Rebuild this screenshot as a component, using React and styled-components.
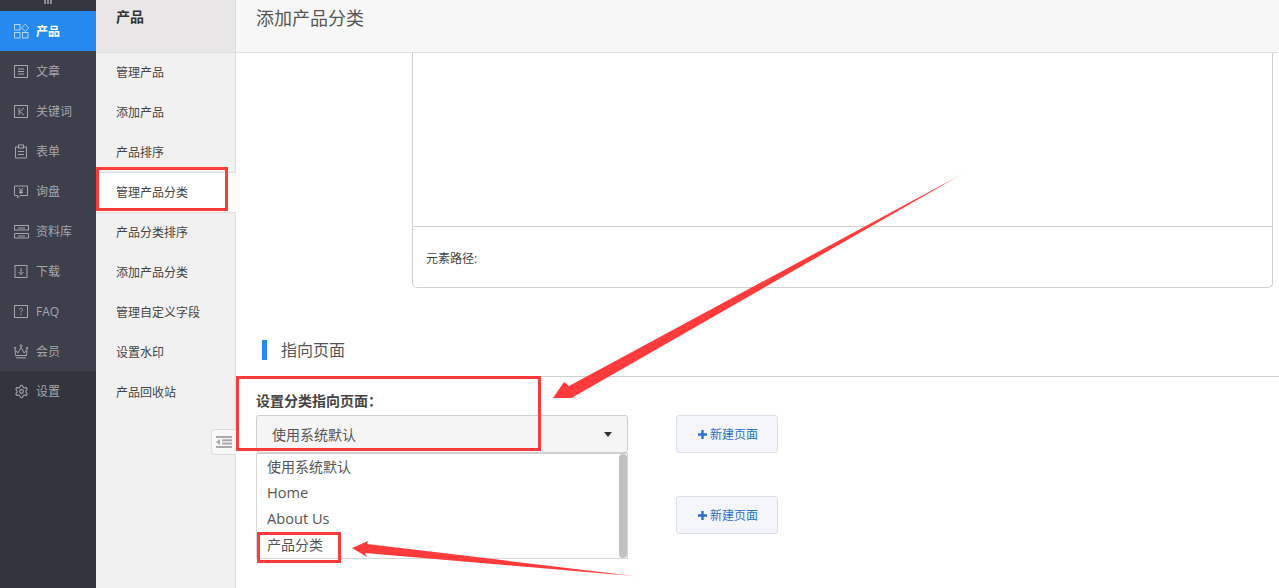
import React from "react";
import styled, { createGlobalStyle } from "styled-components";
import { Settings } from "lucide-react";

const Global = createGlobalStyle`
  html, body { margin: 0; padding: 0; height: 100%; }
  body { font-family: "Open Sans", "Noto Sans CJK SC", sans-serif; color: #333; background: #fff; overflow: hidden; }
  * { box-sizing: border-box; }
`;

const Page = styled.div`
  position: relative;
  display: flex;
  width: 1279px;
  height: 588px;
  overflow: hidden;
`;

const Rail = styled.nav`
  display: flex;
  flex-direction: column;
  flex: 0 0 96px;
  background: #3d3f4b;
`;
const RailTop = styled.div`
  display: flex;
  justify-content: center;
  align-items: flex-start;
  height: 11px;
  background: #33353f;
`;
const RailBottom = styled.div`
  flex: 1;
  background: #32343e;
`;
const RailItem = styled.div`
  display: flex;
  align-items: center;
  gap: 7px;
  height: 40px;
  padding-left: 14px;
  font-size: 12px;
  color: ${(p) => (p.$active ? "#ffffff" : "#a5a6ab")};
  background: ${(p) => (p.$active ? "#2589f0" : "transparent")};
  font-weight: ${(p) => (p.$active ? 700 : 400)};
  svg { flex: 0 0 15px; color: ${(p) => (p.$active ? "#b4d6fa" : "#a5a6ab")}; }
`;

const SubNav = styled.aside`
  position: relative;
  flex: 0 0 140px;
  background: #f1f1f1;
  border-right: 1px solid #dedede;
`;
const SubHeader = styled.div`
  height: 53px;
  padding: 8px 0 0 20px;
  font-size: 14px;
  font-weight: 700;
  line-height: 18px;
  color: #333;
  background: #e8e6e6;
  border-bottom: 1px solid #dcdfe6;
`;
const SubItem = styled.div`
  display: flex;
  align-items: center;
  height: 40px;
  padding: 0 0 2px 20px;
  font-size: 12px;
  color: #444;
  ${(p) =>
    p.$current &&
    `background: #fff;
     margin-right: -1px;
     margin-top: -1px;
     height: 41px;
     position: relative;
     padding-top: 0;
     border-top: 1px solid #dedede;
     border-bottom: 1px solid #dedede;`}
`;
const Collapse = styled.button`
  position: absolute;
  left: 115px;
  top: 429px;
  display: flex;
  align-items: center;
  justify-content: center;
  width: 25px;
  height: 26px;
  padding: 0;
  color: #aaa;
  background: #f8f8f8;
  border: 1px solid #dcdcdc;
  border-right: none;
  border-radius: 4px 0 0 4px;
`;

const Main = styled.main`
  flex: 1;
  min-width: 0;
`;
const MainHeader = styled.header`
  height: 53px;
  padding: 5px 0 0 20px;
  font-size: 18px;
  line-height: 26px;
  color: #555;
  background: #f7f7f7;
  border-bottom: 1px solid #dcdfe6;
`;
const EditorBox = styled.section`
  height: 235px;
  margin: 0 6px 0 176px;
  border: 1px solid #d0d0d0;
  border-top: none;
  border-radius: 0 0 5px 5px;
`;
const EditorBody = styled.div`
  height: 174px;
  border-bottom: 1px solid #d0d0d0;
`;
const EditorPath = styled.div`
  padding: 23px 0 0 13px;
  font-size: 12px;
  line-height: 18px;
  color: #444;
`;
const SectionTitle = styled.h2`
  display: flex;
  align-items: center;
  gap: 14px;
  height: 89px;
  margin: 0;
  padding: 36px 0 0 26px;
  border-bottom: 1px solid #d0d0d0;
  font-size: 16px;
  font-weight: 400;
  line-height: 20px;
  color: #555;
  &::before {
    content: "";
    align-self: flex-start;
    margin-top: 16px;
    width: 5px;
    height: 20px;
    background: #2589f0;
  }
`;
const FormRow = styled.div`
  display: flex;
  gap: 48px;
  padding: 16px 0 0 20px;
`;
const Field = styled.div`
  flex: 0 0 372px;
`;
const Label = styled.div`
  height: 22px;
  font-size: 14px;
  font-weight: 700;
  line-height: 16px;
  color: #444;
`;
const Select = styled.div`
  display: flex;
  align-items: center;
  justify-content: space-between;
  height: 38px;
  padding: 0 15px;
  font-size: 14px;
  color: #555;
  background: #f5f5f5;
  border: 1px solid #cfcfcf;
  border-radius: 3px;
`;
const Caret = styled.span`
  width: 0;
  height: 0;
  border-left: 4.5px solid transparent;
  border-right: 4.5px solid transparent;
  border-top: 5px solid #333;
`;
const Dropdown = styled.div`
  display: flex;
  height: 106px;
  background: #fff;
  border: 1px solid #d8d8d8;
  border-top-color: #cfcfcf;
`;
const Options = styled.ul`
  flex: 1;
  margin: 0;
  padding: 0;
  list-style: none;
`;
const Option = styled.li`
  height: 26px;
  padding-left: 10px;
  font-size: ${(p) => (p.$latin ? "14.6px" : "14px")};
  line-height: ${(p) => (p.$latin ? "24px" : "26px")};
  color: #555;
`;
const Thumb = styled.div`
  flex: 0 0 8px;
  border-radius: 4px;
  background: #c1c1c1;
`;
const Actions = styled.div`
  display: flex;
  flex-direction: column;
  gap: 43px;
  padding-top: 22px;
`;
const NewPage = styled.button`
  display: flex;
  align-items: center;
  justify-content: center;
  gap: 3px;
  width: 102px;
  height: 38px;
  padding: 0 0 0 2px;
  font-family: inherit;
  font-size: 12px;
  color: #2a6fd0;
  background: #f4f6fb;
  border: 1px solid #dcdfe8;
  border-radius: 3px;
`;

const Marks = styled.svg`
  position: absolute;
  left: 0;
  top: 0;
  pointer-events: none;
`;

const I = ({ children }) => (
  <svg width="15" height="15" viewBox="0 0 15 15" fill="none" stroke="currentColor" strokeWidth="1">
    {children}
  </svg>
);

const icons = {
  grid: (
    <I>
      <rect x=".5" y=".5" width="5.500" height="5.500" />
      <path d="M11.200 .2 14.800 3.800 11.200 7.400 7.600 3.800Z" />
      <rect x=".5" y="8.500" width="5.500" height="5.500" />
      <rect x="8.500" y="8.500" width="5.500" height="5.500" />
    </I>
  ),
  doc: (
    <I>
      <rect x=".5" y="1.500" width="13" height="12" />
      <path d="M4 5h6M4 7.500h6M4 10h6" />
    </I>
  ),
  key: (
    <I>
      <rect x=".5" y="1.500" width="13" height="12" />
      <path d="M5 4v7M10 4 5.500 7.500 10 11" />
    </I>
  ),
  form: (
    <I>
      <path d="M4 3H1.500v11h11V3H10" />
      <rect x="4.500" y="1" width="5" height="3" />
      <path d="M4 7.500h6M4 10.500h6" />
    </I>
  ),
  ask: (
    <I>
      <path d="M.5 2h13v9.500H6L3.500 14v-2.500H.5Z" />
      <path d="M5 4l2 2.500L9 4M7 6.500V10M5 7h4M5 8.500h4" />
    </I>
  ),
  lib: (
    <I>
      <rect x=".5" y="1.500" width="14" height="4.500" />
      <path d="M.5 9.500h14v4.500H.5Z" />
      <path d="M4 4h7M4 12h7" />
    </I>
  ),
  down: (
    <I>
      <rect x="1" y="1.500" width="12" height="12" />
      <path d="M7 4v6.500M4.500 8 7 10.500 9.500 8" />
    </I>
  ),
  faq: (
    <I>
      <rect x=".5" y="1.500" width="13" height="12" />
      <path d="M5.500 5.500C5.500 4 8.500 4 8.500 5.700 8.500 7 7 7 7 8.500M7 9.800v1.200" />
    </I>
  ),
  crown: (
    <I>
      <path d="M1 5.500 3.800 9 7 3.500 10.200 9 13 5.500 12.500 11.500H1.500Z" />
      <path d="M2 13.800h10" />
      <circle cx="7" cy="1.800" r="1" />
      <circle cx="1" cy="4" r=".8" />
      <circle cx="13" cy="4" r=".8" />
    </I>
  ),
};

const railItems = [
  ["grid", "产品", true],
  ["doc", "文章"],
  ["key", "关键词"],
  ["form", "表单"],
  ["ask", "询盘"],
  ["lib", "资料库"],
  ["down", "下载"],
  ["faq", "FAQ"],
  ["crown", "会员"],
];

const subItems = ["管理产品", "添加产品", "产品排序", "管理产品分类", "产品分类排序", "添加产品分类", "管理自定义字段", "设置水印", "产品回收站"];

const PlusIcon = () => (
  <svg width="9" height="9" viewBox="0 0 9 9" fill="#2a6fd0">
    <path d="M3.300 0h2.400v3.300H9v2.400H5.700V9H3.300V5.700H0V3.300h3.300Z" />
  </svg>
);

export default function App() {
  return (
    <Page>
      <Global />
      <Rail>
        <RailTop>
          <svg width="10" height="5" viewBox="0 0 10 5" fill="#8d8e94">
            <rect x="1" width="2" height="4" />
            <rect x="4" width="2" height="4" />
            <rect x="7" width="2" height="4" />
          </svg>
        </RailTop>
        {railItems.map(([icon, label, active]) => (
          <RailItem key={label} $active={active}>
            {icons[icon]}
            {label}
          </RailItem>
        ))}
        <RailBottom>
          <RailItem>
            <Settings size={15} strokeWidth={1.700} />
            设置
          </RailItem>
        </RailBottom>
      </Rail>
      <SubNav>
        <SubHeader>产品</SubHeader>
        {subItems.map((label, i) => (
          <SubItem key={label} $current={i === 3}>
            {label}
          </SubItem>
        ))}
        <Collapse aria-label="收起">
          <svg width="16" height="12" viewBox="0 0 16 12" fill="currentColor">
            <rect x="0" y="0" width="16" height="2" />
            <rect x="6" y="3.300" width="10" height="2" />
            <rect x="6" y="6.600" width="10" height="2" />
            <rect x="0" y="10" width="16" height="2" />
            <path d="M4 3v6L0 6Z" />
          </svg>
        </Collapse>
      </SubNav>
      <Main>
        <MainHeader>添加产品分类</MainHeader>
        <EditorBox>
          <EditorBody />
          <EditorPath>元素路径:</EditorPath>
        </EditorBox>
        <SectionTitle>指向页面</SectionTitle>
        <FormRow>
          <Field>
            <Label>设置分类指向页面：</Label>
            <Select>
              使用系统默认
              <Caret />
            </Select>
            <Dropdown>
              <Options>
                <Option>使用系统默认</Option>
                <Option $latin>Home</Option>
                <Option $latin>About Us</Option>
                <Option>产品分类</Option>
              </Options>
              <Thumb />
            </Dropdown>
          </Field>
          <Actions>
            <NewPage>
              <PlusIcon />
              新建页面
            </NewPage>
            <NewPage>
              <PlusIcon />
              新建页面
            </NewPage>
          </Actions>
        </FormRow>
      </Main>
      <Marks width="1279" height="588" viewBox="0 0 1279 588" fill="none">
        <defs>
          <linearGradient id="fadeA" gradientUnits="userSpaceOnUse" x1="965" y1="173" x2="935" y2="190">
            <stop offset="0" stopColor="#ff3b3b" stopOpacity="0.2" />
            <stop offset="1" stopColor="#ff3b3b" />
          </linearGradient>
          <linearGradient id="fadeB" gradientUnits="userSpaceOnUse" x1="638" y1="576" x2="610" y2="572.500">
            <stop offset="0" stopColor="#ff3b3b" stopOpacity="0.2" />
            <stop offset="1" stopColor="#ff3b3b" />
          </linearGradient>
        </defs>
        <g stroke="#ff3b3b" strokeWidth="3">
          <rect x="97.500" y="168.500" width="129" height="41" />
          <rect x="237.500" y="377.500" width="302" height="72" />
          <rect x="258.500" y="533.500" width="81" height="28" />
        </g>
        <polygon points="553,398 564,382 569,386 965,172.500 575,396 572,398" fill="url(#fadeA)" />
        <polygon points="352,548 368,541 367,544 638.500,576.500 365,553 367,557" fill="url(#fadeB)" />
      </Marks>
    </Page>
  );
}
